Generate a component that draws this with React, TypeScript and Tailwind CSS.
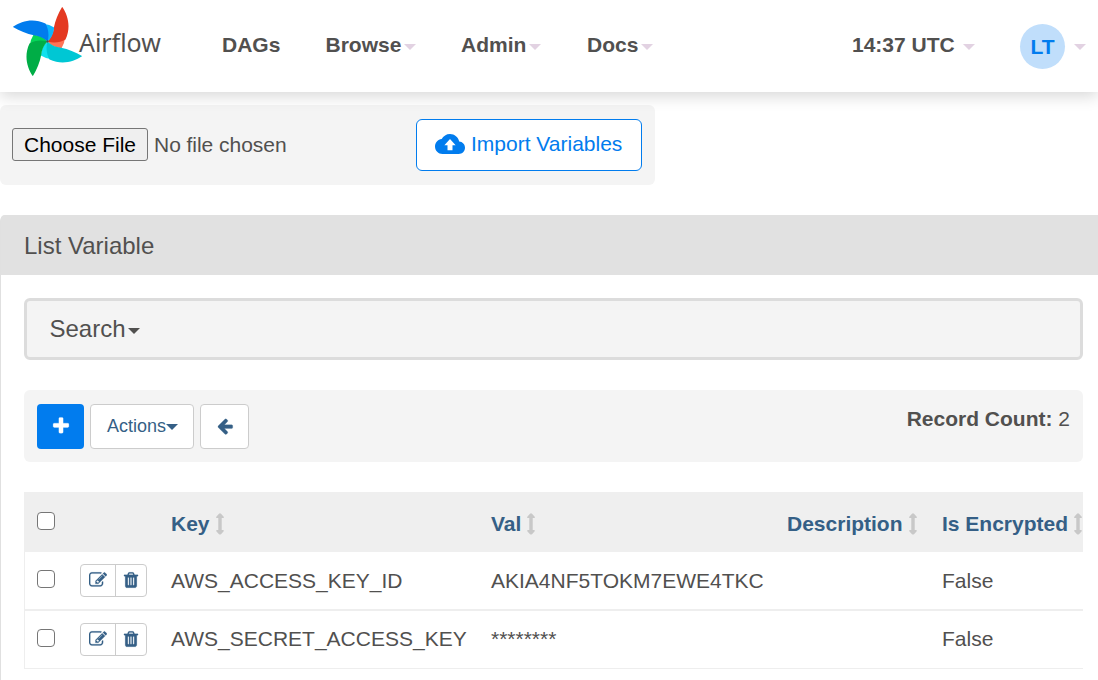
import React from "react";

const ICONS = {
  edit: "M888 1184l116-116-152-152-116 116v56h96v96h56zm440-720q-16-16-33 1l-350 350q-17 17-1 33t33-1l350-350q17-17 1-33zm80 594v190q0 119-84.5 203.5t-203.5 84.5h-832q-119 0-203.5-84.5t-84.5-203.5v-832q0-119 84.5-203.5t203.5-84.5h832q63 0 117 25 15 7 18 23 3 17-9 29l-49 49q-14 14-32 8-23-6-45-6h-832q-66 0-113 47t-47 113v832q0 66 47 113t113 47h832q66 0 113-47t47-113v-126q0-13 9-22l64-64q15-15 35-7t20 29zm-96-738l288 288-672 672h-288v-288zm444 132l-92 92-288-288 92-92q28-28 68-28t68 28l152 152q28 28 28 68t-28 68z",
  trash: "M704 1376v-704q0-14-9-23t-23-9h-64q-14 0-23 9t-9 23v704q0 14 9 23t23 9h64q14 0 23-9t9-23zm256 0v-704q0-14-9-23t-23-9h-64q-14 0-23 9t-9 23v704q0 14 9 23t23 9h64q14 0 23-9t9-23zm256 0v-704q0-14-9-23t-23-9h-64q-14 0-23 9t-9 23v704q0 14 9 23t23 9h64q14 0 23-9t9-23zm-544-992h448l-48-117q-7-9-17-11h-317q-10 2-17 11zm928 32v64q0 14-9 23t-23 9h-96v948q0 83-47 143.5t-113 60.5h-832q-66 0-113-58.5t-47-141.5v-952h-96q-14 0-23-9t-9-23v-64q0-14 9-23t23-9h309l70-167q15-37 54-63t79-26h320q40 0 79 26t54 63l70 167h309q14 0 23 9t9 23z",
  left: "M1664 896v128q0 53-32.5 90.5t-84.5 37.5h-704l293 294q38 36 38 90t-38 90l-75 76q-37 37-90 37-52 0-91-37l-651-652q-37-37-37-90 0-52 37-91l651-650q38-38 91-38 52 0 90 38l75 74q38 38 38 91t-38 91l-293 293h704q52 0 84.5 37.5t32.5 90.5z",
  plus: "M1600 736v192q0 40-28 68t-68 28h-416v416q0 40-28 68t-68 28h-192q-40 0-68-28t-28-68v-416h-416q-40 0-68-28t-28-68v-192q0-40 28-68t68-28h416v-416q0-40 28-68t68-28h192q40 0 68 28t28 68v416h416q40 0 68 28t28 68z",
};

function Icon({ name, className }: { name: keyof typeof ICONS; className: string }) {
  return (
    <svg viewBox="0 0 1792 1792" fill="currentColor" stroke="currentColor" strokeWidth="20" className={className}>
      <path d={ICONS[name]} />
    </svg>
  );
}

function SortIcon() {
  return (
    <svg viewBox="0 0 8 22" fill="#c8c8c8" className="h-[22px] w-2 shrink-0">
      <path d="M4 .3 Q4.5 .3 5 .8 L7.7 3.8 Q8.2 5 7 5 H5.7 V17 H7 Q8.2 17 7.7 18.2 L5 21.2 Q4 22 3 21.2 L.3 18.2 Q-.2 17 1 17 H2.3 V5 H1 Q-.2 5 .3 3.8 L3 .8 Q3.5 .3 4 .3Z" />
    </svg>
  );
}

function Caret({ className }: { className: string }) {
  return (
    <svg viewBox="0 0 12 6" fill="currentColor" className={`h-1.5 w-3 shrink-0 ${className}`}>
      <path d="M0 0H12L6 6Z" />
    </svg>
  );
}

const blades = [
  { turn: 0, dark: "#e43921", light: "#ff7557" },
  { turn: 90, dark: "#00c7d4", light: "#11e1ee" },
  { turn: 180, dark: "#00ad46", light: "#04d659" },
  { turn: 270, dark: "#017cee", light: "#0cb6ff" },
];

function Pinwheel() {
  return (
    <svg viewBox="-103.5 -103.5 207 207" className="ml-[13px] mt-[7px] h-[69px] w-[69px] shrink-0">
      {blades.map((b) => (
        <g key={b.turn} transform={`rotate(${b.turn})`}>
          <path fill={b.light} d="M0 0C12 14 25 18 42 20Q51 6 53 -12L25 -10Z" />
          <path fill={b.dark} d="M0 0C12 -12 17 -25 19 -41C23 -62 32 -84 44 -104C62 -78 71 -42 54 -6C40 2 20 6 0 0Z" />
        </g>
      ))}
      <circle r="3.5" fill="#51504f" />
    </svg>
  );
}

const nav = [
  { label: "Browse", place: "ml-[45.5px] w-[90.5px]" },
  { label: "Admin", place: "ml-[45px] w-[80px]" },
  { label: "Docs", place: "ml-[46px] w-[66px]" },
];

const rows = [
  { key: "AWS_ACCESS_KEY_ID", val: "AKIA4NF5TOKM7EWE4TKC", box: "h-[59px] border-b-2", text: "pt-[14px]" },
  { key: "AWS_SECRET_ACCESS_KEY", val: "********", box: "h-[58px] border-b", text: "pt-[13px]" },
];

function Check({ className }: { className: string }) {
  return <input type="checkbox" className={`size-[18px] shrink-0 appearance-none rounded-[4px] border-[1.5px] border-[#767676] bg-white ${className}`} />;
}

function Header() {
  return (
    <header className="relative z-10 flex h-[92px] bg-white text-[21px] font-bold leading-[30px] shadow-[0_4px_15px_0_rgba(0,0,0,0.16)]">
      <Pinwheel />
      <span className="-ml-[3px] mt-[23.5px] w-[82px] whitespace-nowrap font-['Noto_Sans',sans-serif] text-[25px] font-normal leading-[36px] tracking-[-0.05px]">Airflow</span>
      <nav className="flex h-[90px] items-center">
        <a className="ml-[61px] w-[58px]">DAGs</a>
        {nav.map((n) => (
          <a key={n.label} className={`flex items-center justify-between ${n.place}`}>
            {n.label}
            <Caret className="mt-[3px] text-[#e2d2e2]" />
          </a>
        ))}
      </nav>
      <div className="ml-auto flex">
        <div className="flex h-[90px] w-[123px] items-center justify-between">
          14:37 UTC
          <Caret className="mt-[3px] text-[#e2d2e2]" />
        </div>
        <div className="ml-[45px] mt-[24px] flex size-[45px] items-center justify-center rounded-full bg-[#c0defb] text-[#017cee]">LT</div>
        <Caret className="ml-[9px] mt-[44px] text-[#e2d2e2]" />
        <span className="w-3" />
      </div>
    </header>
  );
}

export default function App() {
  return (
    <div className="h-[680px] w-[1098px] overflow-hidden bg-white font-['Liberation_Sans',Arial,sans-serif] text-[21px] leading-[30px] text-[#51504f]">
      <Header />
      <form className="mt-[13px] flex h-20 w-[655px] rounded-[6px] bg-[#f4f4f4] pl-3">
        <button type="button" className="mt-[23px] h-[33px] w-[136px] whitespace-nowrap rounded-[3px] border border-[#767676] bg-[#efefef] text-[21px] leading-[31px] text-black">Choose File</button>
        <span className="ml-[6px] mt-[25px] w-[262px] tracking-[-0.04px]">No file chosen</span>
        <button type="button" className="mt-[14px] flex h-[52px] w-[226px] rounded-[6px] border border-[#017cee] bg-white pl-[18px] pt-[9px] text-[#017cee]">
          <svg viewBox="0 4 24 16" fill="currentColor" className="mt-[5px] h-5 w-[30px]">
            <path d="M19.35 10.04C18.67 6.59 15.64 4 12 4 9.11 4 6.6 5.64 5.35 8.04 2.34 8.36 0 10.91 0 14c0 3.31 2.69 6 6 6h13c2.76 0 5-2.24 5-5 0-2.64-2.05-4.78-4.65-4.96zM14 13v4h-4v-4H7.5L12 8l4.5 5H14z" />
          </svg>
          <span className="ml-[6px] whitespace-nowrap">Import Variables</span>
        </button>
      </form>

      <section className="mt-[30px] h-[465px] rounded-tl-[6px] border-l border-[#e0e0e0]">
        <h1 className="h-[60px] rounded-tl-[4px] bg-[#e1e1e1] pl-[23px] pt-[16px] text-[24px]">List Variable</h1>
        <div className="ml-[23px] mr-[15px] mt-[23px]">
          <div className="flex h-[62px] items-center rounded-[6px] border-[3px] border-[#dcdcdc] bg-[#f4f4f4] pl-[22.5px] text-[24px]">
            <span>Search</span>
            <Caret className="ml-[2px] mt-[3px]" />
          </div>
          <div className="mt-[30px] flex h-[72px] rounded-[6px] bg-[#f4f4f4] px-[13px] pt-[14px] text-[#355f86]">
            <button className="flex h-[45px] w-[47px] justify-center rounded-[4px] bg-[#017cee] pt-[12px] text-white"><Icon name="plus" className="size-[20px]" /></button>
            <button className="ml-[6px] flex h-[45px] w-[104px] items-center rounded-[4px] border border-[#ccc] bg-white pb-[2px] pl-[16px] text-[18px]">
              Actions<Caret className="mt-[2px]" />
            </button>
            <button className="ml-[6px] flex h-[45px] w-[49px] items-center justify-center rounded-[4px] border border-[#ccc] bg-white pb-[2px]"><Icon name="left" className="size-[18px]" /></button>
            <div className="ml-auto text-[#51504f]"><strong>Record Count:</strong> 2</div>
          </div>
          <div className="mt-[30px] overflow-hidden">
            <div className="flex h-[60px] bg-[#efefef] pl-[13px] font-bold text-[#355f86]">
              <Check className="mt-5" />
              <div className="ml-[116px] flex w-[320px] shrink-0 items-center gap-[6px] pt-[3px]">Key<SortIcon /></div>
              <div className="flex w-[296px] shrink-0 items-center gap-[6px] pt-[3px]">Val<SortIcon /></div>
              <div className="flex w-[155px] shrink-0 items-center gap-[6px] pt-[3px]">Description<SortIcon /></div>
              <div className="flex shrink-0 items-center gap-[6px] whitespace-nowrap pt-[3px]">Is Encrypted<SortIcon /></div>
            </div>
            {rows.map((r) => (
              <div key={r.key} className={`flex border-l border-[#eee] pl-3 ${r.box}`}>
                <Check className="mt-[18px]" />
                <div className="ml-[25px] mt-3 flex h-[33px] w-[67px] shrink-0 rounded-[4px] border border-[#ccc] text-[#355f86]">
                  <span className="flex w-[35px] items-start border-r border-[#ccc] pl-2 pt-[6px]"><Icon name="edit" className="size-[18px]" /></span>
                  <span className="flex flex-1 items-start pl-[6px] pt-[6px]"><Icon name="trash" className="size-[18px]" /></span>
                </div>
                <div className={`ml-6 w-[320px] shrink-0 ${r.text}`}>{r.key}</div>
                <div className={`w-[451px] shrink-0 ${r.text}`}>{r.val}</div>
                <div className={r.text}>False</div>
              </div>
            ))}
          </div>
        </div>
      </section>
    </div>
  );
}
